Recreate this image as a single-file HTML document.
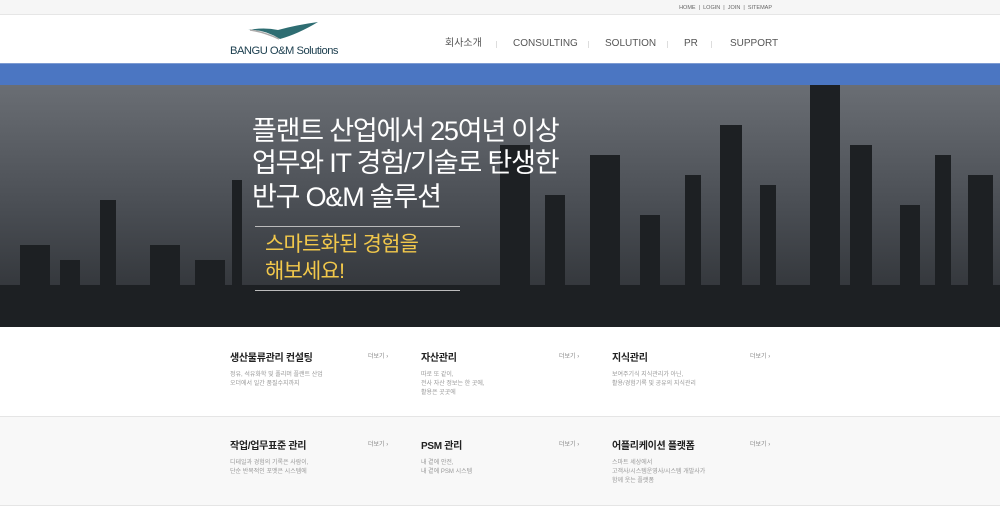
<!DOCTYPE html>
<html><head><meta charset="utf-8"><style>
*{margin:0;padding:0;box-sizing:border-box}
body{width:1000px;height:517px;overflow:hidden;font-family:"Liberation Sans","Noto Sans CJK KR",sans-serif;background:#fff;position:relative}
.top{position:absolute;top:0;left:0;width:1000px;height:15px;background:#f6f6f6;border-bottom:1px solid #e6e6e6;font-size:5.5px;color:#666}
.top span{position:absolute;top:5px;right:228px}
.logo{position:absolute;left:230px;top:45px;font-size:11.2px;line-height:13px;color:#1e4050;letter-spacing:-0.5px}
.nav{position:absolute;top:38px;font-size:10px;line-height:12px;color:#555}
.sep{position:absolute;top:41px;width:1px;height:7px;background:#ddd}
.blue{position:absolute;top:63px;left:0;width:1000px;height:22px;background:#4b76c2;border-top:1px solid #7d9bd2}
.hero{position:absolute;top:85px;left:0;width:1000px;height:242px;background:linear-gradient(#6a6e74,#4a4e54 50%,#2a2d31);overflow:hidden}
.t{position:absolute;color:#fff;font-size:27px;line-height:30px;letter-spacing:-1.2px;left:252px;white-space:nowrap;font-weight:normal}
.y{position:absolute;color:#f2c84b;font-size:21px;line-height:26px;left:265px;letter-spacing:-0.8px}
.ln{position:absolute;left:255px;width:205px;height:1px;background:#bbb}
.s2{position:absolute;top:416px;left:0;width:1000px;height:90px;background:#f8f8f8;border-top:1px solid #e5e5e5;border-bottom:1px solid #e5e5e5}
.h{position:absolute;font-size:10px;color:#222;font-weight:bold;letter-spacing:-0.3px}
.m{position:absolute;font-size:6px;color:#888}
.d{position:absolute;font-size:6px;color:#999;line-height:9px}
</style></head><body>
<div class="top"><span>HOME &nbsp;|&nbsp; LOGIN &nbsp;|&nbsp; JOIN &nbsp;|&nbsp; SITEMAP</span></div>
<svg style="position:absolute;left:246px;top:20px" width="76" height="24"><path d="M2 10 Q18 9 34 19 Q52 14 72 2 Q50 5 32 10 Q18 7 2 10Z" fill="#2e6d72"/><path d="M4 10 Q18 12 33 19" stroke="#aaa" stroke-width="1.5" fill="none"/></svg>
<div class="logo">BANGU O&amp;M Solutions</div>
<div class="nav" style="left:445px">회사소개</div><div class="sep" style="left:496px"></div>
<div class="nav" style="left:513px">CONSULTING</div><div class="sep" style="left:588px"></div>
<div class="nav" style="left:605px">SOLUTION</div><div class="sep" style="left:667px"></div>
<div class="nav" style="left:684px">PR</div><div class="sep" style="left:711px"></div>
<div class="nav" style="left:730px">SUPPORT</div>
<div class="blue"></div>
<div class="hero">
<svg width="1000" height="242" style="position:absolute;left:0;top:0"><g fill="#1d2023">
<rect x="0" y="200" width="1000" height="42"/>
<rect x="20" y="160" width="30" height="82"/><rect x="60" y="175" width="20" height="67"/><rect x="100" y="115" width="16" height="127"/><rect x="150" y="160" width="30" height="82"/><rect x="195" y="175" width="30" height="67"/>
<rect x="232" y="95" width="10" height="147"/>
<rect x="500" y="60" width="30" height="182"/><rect x="545" y="110" width="20" height="132"/><rect x="590" y="70" width="30" height="172"/><rect x="640" y="130" width="20" height="112"/><rect x="685" y="90" width="16" height="152"/><rect x="720" y="40" width="22" height="202"/><rect x="760" y="100" width="16" height="142"/><rect x="810" y="0" width="30" height="242"/><rect x="850" y="60" width="22" height="182"/><rect x="900" y="120" width="20" height="122"/><rect x="935" y="70" width="16" height="172"/><rect x="968" y="90" width="25" height="152"/>
</g></svg>
<div class="t" style="top:31px">플랜트 산업에서 25여년 이상</div>
<div class="t" style="top:63px">업무와 IT 경험/기술로 탄생한</div>
<div class="t" style="top:97px">반구 O&amp;M 솔루션</div>
<div class="ln" style="top:141px"></div>
<div class="y" style="top:147px">스마트화된 경험을</div>
<div class="y" style="top:174px">해보세요!</div>
<div class="ln" style="top:205px"></div>
</div>
<div class="s2"></div>
<div class="h" style="left:230px;top:349px">생산물류관리 컨설팅</div><div class="m" style="left:368px;top:351px">더보기 ›</div>
<div class="d" style="left:230px;top:371px">정유, 석유화학 및 폴리머 플랜트 산업<br>오더에서 일간 품질수지까지</div>
<div class="h" style="left:421px;top:349px">자산관리</div><div class="m" style="left:559px;top:351px">더보기 ›</div>
<div class="d" style="left:421px;top:371px">따로 또 같이,<br>전사 자산 정보는 한 곳에,<br>활용은 곳곳에</div>
<div class="h" style="left:612px;top:349px">지식관리</div><div class="m" style="left:750px;top:351px">더보기 ›</div>
<div class="d" style="left:612px;top:371px">보여주기식 지식관리가 아닌,<br>활용/경험기록 및 공유의 지식관리</div>
<div class="h" style="left:230px;top:437px">작업/업무표준 관리</div><div class="m" style="left:368px;top:439px">더보기 ›</div>
<div class="d" style="left:230px;top:459px">디테일과 경험의 기록은 사람이,<br>단순 반복적인 포멧은 시스템에</div>
<div class="h" style="left:421px;top:437px">PSM 관리</div><div class="m" style="left:559px;top:439px">더보기 ›</div>
<div class="d" style="left:421px;top:459px">내 곁에 안전,<br>내 곁에 PSM 시스템</div>
<div class="h" style="left:612px;top:437px">어플리케이션 플랫폼</div><div class="m" style="left:750px;top:439px">더보기 ›</div>
<div class="d" style="left:612px;top:459px">스마트 세상에서<br>고객사/시스템운영사/시스템 개발사가<br>함께 웃는 플랫폼</div>
</body></html>
